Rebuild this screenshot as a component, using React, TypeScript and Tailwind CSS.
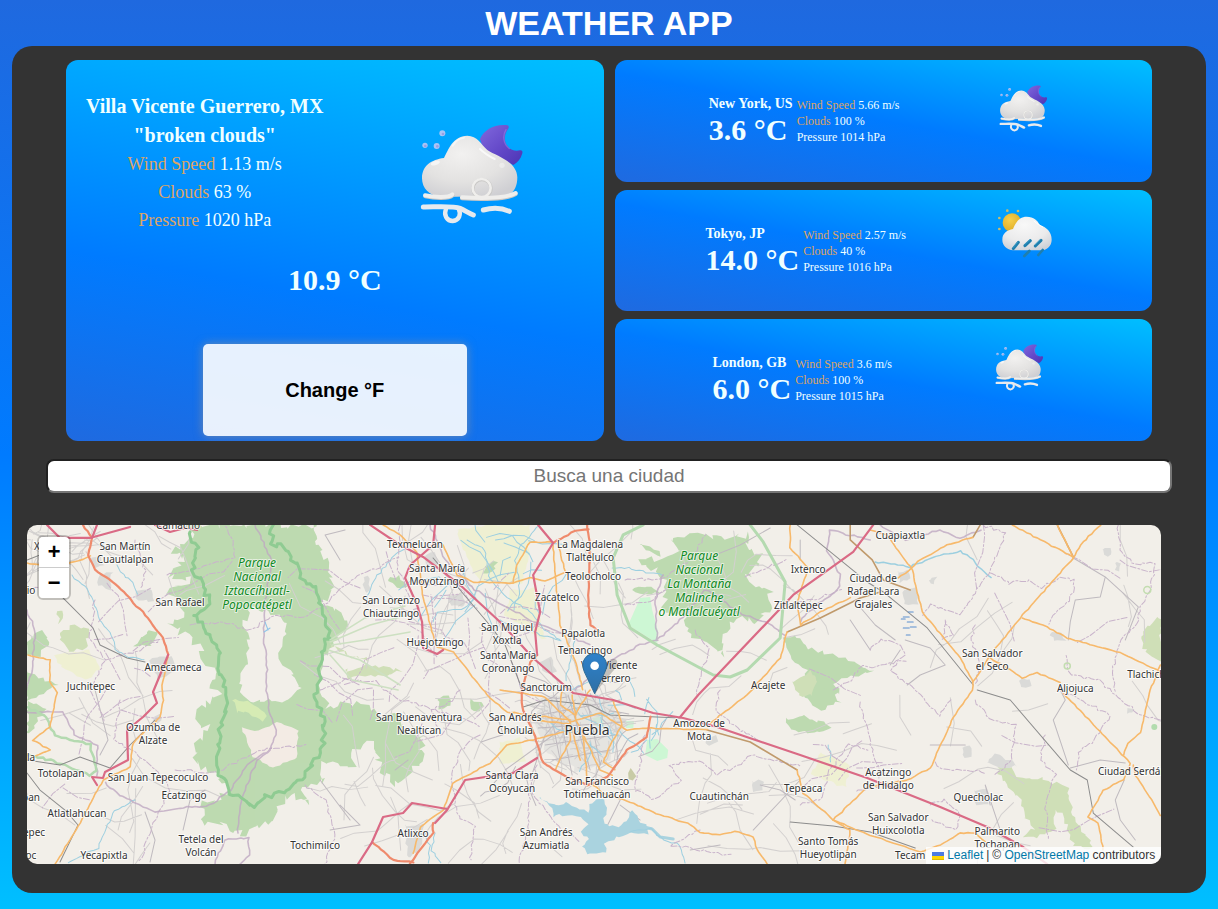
import React, { useState } from "react";

type Point = [number, number];

/* ---------- helpers for the map drawing ---------- */

function seeded(seed: number) {
  let s = seed;
  return () => {
    s = (s * 16807) % 2147483647;
    return s / 2147483647;
  };
}

function parse(points: string): Point[] {
  return points.split(" ").map((p) => p.split(",").map(Number) as Point);
}

/** Subdivides a polyline and shakes it, so that borders and forest edges look natural. */
function rough(points: string, amount: number, seed: number, closed = false): string {
  const rnd = seeded(seed);
  const src = parse(points);
  if (closed) src.push(src[0]);
  const out: string[] = [`M${src[0][0]} ${src[0][1]}`];
  for (let i = 1; i < src.length; i++) {
    const [x0, y0] = src[i - 1];
    const [x1, y1] = src[i];
    const len = Math.hypot(x1 - x0, y1 - y0);
    const steps = Math.max(1, Math.round(len / 4));
    for (let k = 1; k <= steps; k++) {
      const t = k / steps;
      const x = x0 + (x1 - x0) * t + (rnd() - 0.5) * amount;
      const y = y0 + (y1 - y0) * t + (rnd() - 0.5) * amount;
      out.push(`L${x.toFixed(1)} ${y.toFixed(1)}`);
    }
  }
  return out.join("") + (closed ? "Z" : "");
}

function line(points: string): string {
  return "M" + points.split(" ").join("L");
}

const forests = [
  "187,525 193,538 173,552 187,558 167,575 190,580 163,590 177,603 187,612 167,625 187,635 200,648 207,665 218,675 210,685 220,695 200,707 195,720 208,728 197,740 195,757 203,770 219,775 227,790 217,800 200,805 203,823 220,823 233,833 247,833 257,825 275,823 277,807 290,793 310,803 300,787 327,780 320,765 353,765 357,748 370,743 377,757 380,770 393,783 407,777 420,763 423,737 407,733 397,713 380,717 370,707 347,703 327,707 320,690 324,660 333,640 350,628 337,612 323,605 333,582 323,558 313,542 317,525",
  "673,538 697,535 720,538 747,535 743,545 760,555 753,568 747,577 770,592 767,615 753,622 737,615 727,628 723,655 713,648 706,640 687,632 683,615 663,608 667,592 663,575 640,560 660,558 680,552",
  "783,638 793,634 807,648 833,655 857,662 872,672 850,677 833,682 840,694 822,696 813,688 800,690 806,670 793,658",
  "803,690 830,690 840,702 820,710 806,700",
  "786,718 805,717 830,726 820,732 790,731",
  "33,638 42,630 50,642 40,655 27,655 27,642",
  "147,632 158,630 150,648 135,645",
  "27,672 57,685 40,695 27,700",
  "27,700 45,708 33,730 27,735",
  "438,699 448,696 450,705 440,709",
  "472,700 483,702 480,711 471,708",
  "485,566 497,561 492,572 484,573",
  "388,580 400,577 406,585 398,589",
  "632,590 652,587 660,593 645,595",
  "640,545 655,548 660,555 648,552",
];

const paleWoods = [
  "997,768 1010,767 1020,778 1037,778 1067,787 1073,817 1087,837 1092,848 1075,845 1060,815 1052,800 1055,830 1035,838 1023,837 1033,828 1023,817 1018,797 1010,790",
  "1143,635 1155,618 1161,620 1161,662 1153,658 1142,648",
  "60,635 70,625 87,628 85,648 70,652",
  "57,612 62,608 64,620 58,624",
  "793,682 808,672 818,676 812,696 800,697",
  "345,670 370,665 400,671 380,675 350,678",
  "330,645 345,652 370,660 350,655",
];

const farmland = [
  "457,530 490,525 530,525 528,560 522,583 480,583 468,560",
  "510,590 535,588 538,612 545,640 520,625 505,615",
  "55,655 90,650 100,670 85,680 62,668",
  "820,752 850,765 845,788 812,775",
  "230,700 262,705 265,722 240,712",
  "500,742 520,738 525,760 500,765",
];

const towns = [
  "100,575 112,572 110,590 98,585",
  "135,590 150,588 153,602 138,600",
  "150,660 172,655 175,672 158,680",
  "90,560 100,555 104,566 94,568",
  "425,556 436,552 438,565 428,567",
  "447,597 462,592 465,606 450,606",
  "540,662 552,658 556,672 545,673",
  "903,590 916,588 918,605 905,604",
  "897,572 908,570 910,578 900,582",
  "1050,634 1060,632 1065,641 1054,640",
  "1020,680 1030,678 1030,686 1022,687",
  "962,748 970,746 971,757 963,758",
  "988,762 995,754 1010,760 1018,766 1000,768",
  "975,791 985,789 988,804 976,804",
  "405,826 423,824 420,850 408,858",
  "752,782 762,780 763,790 753,791",
  "706,738 716,736 717,744 707,746",
  "930,580 936,578 935,584 930,585",
  "1102,550 1110,548 1112,555 1104,556",
  "1115,563 1121,562 1120,570 1116,569",
  "363,578 369,576 370,592 364,592",
  "1127,708 1133,708 1133,713 1127,713",
  "153,717 160,714 162,722 155,724",
];

const waterways = [
  "875,562 910,567 940,555 960,551 975,562 990,578",
  "72,575 88,590 95,605 100,620 112,635 115,650 128,657 145,660",
  "117,565 125,577 133,583 137,595",
  "135,800 115,810 108,825 98,848 80,856 68,862",
  "467,540 485,550 490,580 510,600 530,612 545,630 560,640",
  "540,525 520,545 515,560 520,590 513,610",
  "433,622 438,612 465,608 475,598",
  "612,568 628,568 650,573 663,575",
  "435,833 432,850 440,862",
  "420,830 430,845 428,862",
  "367,600 375,578 395,555 405,550",
  "630,832 650,828 660,838 680,845 685,862",
  "828,745 831,755 830,762",
  "575,640 570,665 565,680",
  "600,660 592,680 570,690",
  "500,620 540,635 560,640",
];

const parkEdge =
  "190,532 197,548 192,572 203,582 210,605 193,615 210,635 220,655 217,672 228,692 225,710 220,730 218,773 230,793 245,800 253,808 267,797 287,790 307,773 323,747 325,720 317,703 315,695 320,675 323,648 330,635 320,608 317,588 300,578 297,565 283,545 270,545 273,525";

const malincheEdge =
  "643,525 623,535 613,558 617,595 630,628 657,645 713,675 730,677 747,670 780,638 785,582 763,542 750,525";

const motorways = [
  "47,525 60,538 90,538 130,527",
  "97,525 92,538",
  "168,655 160,675 153,692 157,703 143,717 127,730 128,760 105,772 103,778 92,777 97,785",
  "370,525 400,545 423,557 460,585 500,622 533,658 573,693 613,700 653,713 683,718 717,727 800,755 867,778 940,807 987,827 1023,847 1047,864",
  "435,525 433,545 410,565 405,578 417,605 422,622 423,648 437,654 443,650",
  "873,525 853,552 793,595 698,695 680,717",
  "538,525 553,543 533,575 540,612 535,632 537,655",
  "537,758 513,773 465,780 447,810 435,823",
  "447,809 412,803 403,813 383,817 372,842 358,864",
  "155,525 170,532 185,528 197,530",
];

const trunks = [
  "83,525 92,538 88,555 95,570 113,582 127,595 133,603 143,612 153,625 163,638 168,655",
  "537,655 530,662 522,690 522,707 535,737 543,763 567,777 587,785 607,777 627,750 647,737 650,717",
  "587,525 590,545 588,595 590,625 600,632",
  "433,823 433,833 417,853 410,864",
  "372,842 393,860 413,862",
  "553,543 575,531 588,529",
  "596,690 600,672 592,660",
];

const primaries = [
  "168,657 162,685 163,700 160,717 133,743 130,767 103,780 80,823 55,864",
  "28,655 50,660 50,682 57,693 50,727 33,740 50,750 36,756",
  "27,563 50,567 75,562 90,556",
  "383,525 400,535 417,552 423,598 433,635 437,647 453,652 487,695 507,712 533,715 570,720",
  "443,545 457,575 473,582 513,583 530,578 545,581 565,572 557,540",
  "513,583 517,565 530,542 553,542",
  "553,545 555,575 560,625 575,660 583,690",
  "563,732 533,740 507,745 490,763 453,783 443,810 420,827 413,853",
  "583,733 587,780 603,793 630,802 660,815 687,823 700,832 720,835 735,831 753,837 757,850 767,864",
  "570,722 600,713 627,730 647,728 707,730",
  "797,770 803,793 833,820 870,835 920,852 940,845 960,833 975,833 985,842",
  "833,820 867,787 907,780 930,768 953,717 972,690 973,682 990,655 1020,618 1073,558 1080,545 1100,525",
  "1012,525 1073,557 1057,525",
  "870,530 887,535 912,570 922,612 960,658 973,682",
  "898,578 912,568 917,562 947,545 973,537",
  "1022,618 1043,625 1067,638 1120,653 1161,672",
  "990,658 1010,670 1022,678 1037,673 1060,682",
  "1063,693 1130,763 1123,780 1103,790 1088,817 1098,823 1103,850",
  "1160,665 1150,690 1140,733 1128,743 1123,755",
  "1133,765 1135,775 1147,793 1160,815",
  "790,525 790,548 808,568 797,602 800,625 820,612 850,598",
  "787,632 780,658 747,695 710,723",
  "500,690 545,697 570,722 580,760",
  "572,695 576,720 600,770 612,775",
  "535,720 570,724 570,740 555,770",
  "613,700 622,725 610,745 603,762 615,770",
  "590,690 575,715 560,705 562,690",
  "833,820 850,830 845,864",
];

const browns = [
  "850,525 850,540 872,560 883,580 910,590",
  "973,537 980,525",
  "787,632 820,618 860,598 880,592",
  "707,730 750,742 797,770",
  "1057,525 1073,557",
];

const rails = [
  "27,560 40,555 63,598 93,628 100,645 127,658 145,662",
  "433,558 487,622 505,645 523,692",
  "797,525 867,582 883,592 927,628 973,685",
  "977,690 1010,700 1070,770 1087,780 1093,813 1133,847",
  "523,707 545,700 590,705 610,715 680,718",
  "790,822 833,826 870,832 915,848",
  "27,760 60,765 80,757 110,768 130,745 155,720",
  "27,773 40,790 65,810 78,825 60,862",
];

const regionBorders = [
  "255,525 272,560 265,600 263,640 267,662 266,690 270,715 277,730 270,750 250,762 230,790 210,805 180,808 155,812 140,805 120,795 105,782",
  "238,833 240,810 245,790 257,760 272,748",
  "27,610 35,630 32,670 27,690",
  "27,712 63,712 75,735 97,745 97,775",
  "430,525 445,560 475,590 540,625 590,645",
  "663,575 655,600 657,640 680,620 705,590 720,597 735,612 765,622 785,635",
  "215,864 225,840 248,838 250,855 240,864",
  "575,690 610,660 640,645 657,640",
  "870,540 850,535 830,530 827,550 840,575 838,590 810,610 800,622",
  "880,525 905,540 940,530 960,538 980,530",
];

const dashedBorders = [
  "167,575 200,567 235,558 233,540 225,525",
  "190,625 220,622 250,630 275,615 303,618 325,605 350,580 400,557",
  "175,770 215,772 260,750 305,745",
  "305,785 325,800 335,835 325,864",
  "320,690 345,680 375,682 400,700 420,705 480,725",
  "983,525 1005,533 990,570 960,615 930,605 922,615",
  "990,573 1010,583 1030,580 1040,588 1060,578 1075,580 1070,600 1055,612 1050,625",
  "1118,525 1120,550 1135,565 1155,563 1150,590 1140,607 1137,625 1120,640 1112,670 1115,690",
  "870,650 880,640 900,645 905,655 890,670 915,690 940,715 950,700",
  "975,625 970,640 980,660 975,685",
  "945,620 952,635 942,640 945,622",
  "1060,690 1080,700 1110,715 1095,740 1080,750 1075,770",
  "975,700 990,720 1015,725 1012,760 995,775",
  "1045,735 1040,760 1055,775 1045,800 1048,840",
  "645,735 640,765 635,790 655,800 680,780 670,765 700,760 715,775 740,765 750,755 800,765",
  "700,830 670,845 700,850 730,855",
  "480,735 460,750 450,780 460,820 475,825 470,860",
  "537,765 530,790 545,810 560,830 580,840",
  "530,790 528,830 518,864",
  "860,702 870,745 880,770 880,785 855,792",
  "935,762 945,770 965,770 985,772",
  "800,805 820,800 830,770 848,745 868,750",
  "720,690 715,710 740,730 760,740",
  "1160,720 1140,715 1115,695 1100,680 1070,675 1065,655",
  "135,540 145,570 140,590",
  "95,600 90,640 105,660 90,690 105,720",
  "105,660 140,650 160,640",
  "120,700 115,740 145,760 160,775 170,790 150,830 140,862",
  "400,525 398,570 410,600",
  "460,690 455,700 430,710 440,730",
  "625,580 665,578 690,560 705,535",
  "625,605 650,600 672,585",
  "745,577 760,570 785,560",
  "785,605 815,600 840,590",
  "833,690 850,680 862,665 875,668 905,660",
  "695,630 710,650 700,675 695,695",
  "930,805 945,800 960,815 955,830 930,820",
];

const lake =
  "540,797 546,801 553,805 567,803 576,808 587,812 592,802 597,798 605,799 607,812 603,823 617,827 626,820 631,811 636,813 637,821 647,825 647,834 630,832 617,838 605,843 607,852 587,853 581,846 590,840 581,833 587,823 580,818 567,815 553,816 551,808";

/** Minor roads, thrown over the plain between the given bounds. */
function tracks(count: number, x0: number, y0: number, w: number, h: number, seed: number, reach = 22): string {
  const rnd = seeded(seed);
  let d = "";
  for (let i = 0; i < count; i++) {
    let x = x0 + rnd() * w;
    let y = y0 + rnd() * h;
    let a = rnd() * Math.PI * 2;
    d += `M${x.toFixed(1)} ${y.toFixed(1)}`;
    const n = 2 + Math.floor(rnd() * 4);
    for (let k = 0; k < n; k++) {
      a += (rnd() - 0.5) * 1.2;
      x += Math.cos(a) * reach * (0.4 + rnd() * 0.8);
      y += Math.sin(a) * reach * (0.4 + rnd() * 0.8);
      d += `L${x.toFixed(1)} ${y.toFixed(1)}`;
    }
  }
  return d;
}

/** Centre x, middle of the first line, then the lines. */
const places: [number, number, string[]][] = [
  [178, 525, ["Camacho"]],
  [125, 546, ["San Martín", "Cuautlalpan"]],
  [37, 546, ["X"]],
  [31, 590, ["io"]],
  [180, 602, ["San Rafael"]],
  [173, 667, ["Amecameca"]],
  [91, 686, ["Juchitepec"]],
  [153, 727, ["Ozumba de", "Alzate"]],
  [31, 757, ["la"]],
  [61, 773, ["Totolapan"]],
  [158, 777, ["San Juan Tepecoculco"]],
  [184, 795, ["Ecatzingo"]],
  [31, 797, ["pan"]],
  [77, 813, ["Atlatlahucan"]],
  [34, 832, ["epec"]],
  [31, 855, ["oc"]],
  [104, 855, ["Yecapixtla"]],
  [201, 839, ["Tetela del", "Volcán"]],
  [315, 845, ["Tochimilco"]],
  [415, 544, ["Texmelucan"]],
  [437, 568, ["Santa María", "Moyotzingo"]],
  [391, 600, ["San Lorenzo", "Chiautzingo"]],
  [435, 642, ["Huejotzingo"]],
  [507, 627, ["San Miguel", "Xoxtla"]],
  [508, 655, ["Santa María", "Coronango"]],
  [546, 687, ["Sanctorum"]],
  [557, 597, ["Zacatelco"]],
  [590, 544, ["La Magdalena", "Tlaltelulco"]],
  [593, 576, ["Teolocholco"]],
  [583, 633, ["Papalotla"]],
  [585, 650, ["Tenancingo"]],
  [609, 665, ["Villa Vicente", "Guerrero"]],
  [419, 717, ["San Buenaventura", "Nealtican"]],
  [515, 717, ["San Andrés", "Cholula"]],
  [512, 775, ["Santa Clara", "Ocoyucan"]],
  [597, 781, ["San Francisco", "Totimehuacán"]],
  [546, 832, ["San Andrés", "Azumiatla"]],
  [413, 833, ["Atlixco"]],
  [699, 723, ["Amozoc de", "Mota"]],
  [719, 796, ["Cuautinchán"]],
  [768, 685, ["Acajete"]],
  [798, 605, ["Zitlaltépec"]],
  [808, 569, ["Ixtenco"]],
  [900, 535, ["Cuapiaxtla"]],
  [873, 578, ["Ciudad de", "Rafael Lara", "Grajales"]],
  [992, 653, ["San Salvador", "el Seco"]],
  [1075, 688, ["Aljojuca"]],
  [1146, 674, ["Tlachich"]],
  [1132, 771, ["Ciudad Serdán"]],
  [888, 772, ["Acatzingo", "de Hidalgo"]],
  [978, 797, ["Quecholac"]],
  [898, 817, ["San Salvador", "Huixcolotla"]],
  [997, 831, ["Palmarito", "Tochapan"]],
  [803, 788, ["Tepeaca"]],
  [828, 841, ["Santo Tomás", "Hueyotlipan"]],
  [910, 855, ["Tecam"]],
];

const parks: [number, number, string[]][] = [
  [257, 562, ["Parque", "Nacional", "Iztaccíhuatl-", "Popocatépetl"]],
  [699, 555, ["Parque", "Nacional", "La Montaña", "Malinche", "o Matlalcuéyatl"]],
];

function MapCanvas() {
  return (
    <svg
      className="block h-full w-full"
      viewBox="27 525 1134 339"
      preserveAspectRatio="xMidYMid slice"
      role="img"
      aria-label="Mapa de Puebla"
      strokeLinejoin="round"
      strokeLinecap="round"
    >
      <defs>
        <linearGradient id="pin" x1="0" y1="0" x2="0" y2="1">
          <stop offset="0" stopColor="#2e82cb" />
          <stop offset="1" stopColor="#2e6fa5" />
        </linearGradient>
      </defs>
      <rect x="27" y="525" width="1134" height="339" fill="#f2efe9" />
      <g fill="#eff0d3">
        {farmland.map((p, i) => (
          <path key={i} d={rough(p, 3, 40 + i, true)} />
        ))}
      </g>
      <g fill="#bddab1">
        {forests.map((p, i) => (
          <path key={i} d={rough(p, i < 2 ? 8 : 4, 11 + i, true)} />
        ))}
      </g>
      <g fill="#cfdfb7">
        {paleWoods.map((p, i) => (
          <path key={i} d={rough(p, 5, 71 + i, true)} />
        ))}
      </g>
      <g fill="#f2efe9">
        <path d={rough("253,608 243,622 250,638 246,662 238,682 245,698 262,702 285,700 300,690 290,670 277,655 285,638 283,618 270,612", 6, 9, true)} />
      </g>
      <path d={rough("242,728 253,757 273,768 297,757 298,730 277,722 258,731", 2, 5, true)} fill="#f3ebe4" />
      <path d={rough("233,700 248,701 268,716 262,722 246,712 236,712", 3, 8, true)} fill="#d6ecb4" />
      <g fill="#cdf7d4">
        <path d="M640 598L650 597L652 610L658 632L657 643L628 625Z" />
        <path d="M647 740L657 739L668 750L667 758L657 761L645 755Z" />
        <path d="M625 721L634 721L633 728L626 728Z" />
        <path d="M592 718L602 716L604 725L596 727Z" />
      </g>
      <g fill="#dadad8">
        {towns.map((p, i) => (
          <path key={i} d={rough(p, 3, 90 + i, true)} />
        ))}
        <path d={rough("540,700 575,690 610,700 625,725 605,765 575,770 550,755 535,725", 6, 33, true)} opacity=".55" />
      </g>
      <path d={rough("628,773 631,768 636,776 633,781 629,779", 1, 3, true)} fill="#c8cba6" />

      <g fill="none" stroke="#d3d0cf" strokeWidth="1">
        <path d={tracks(28, 30, 530, 150, 325, 101)} />
        <path d={tracks(46, 340, 530, 250, 200, 202)} />
        <path d={tracks(20, 340, 740, 200, 115, 303)} />
        <path d={tracks(20, 590, 530, 200, 180, 404, 18)} />
        <path d={tracks(12, 640, 740, 170, 115, 505)} />
        <path d={tracks(22, 800, 530, 350, 325, 606)} />
        <path d={tracks(70, 535, 695, 85, 75, 707, 10)} />
        <path d={tracks(26, 30, 530, 60, 35, 808, 12)} />
      </g>
      <g fill="none" stroke="#bfbabf" strokeWidth="1">
        <path d={tracks(16, 480, 680, 160, 100, 917, 12)} />
        <path d="M548 700L560 760M556 697L572 775M568 695L590 770M585 690L600 765M540 715L620 700M538 728L625 722M545 745L615 735M552 760L610 750M530 780L545 735L575 700M505 770L560 730" />
        <path d="M1073 558L1105 577L1138 607L1125 640M1105 577L1100 597L1075 600L1070 622L1068 640M1060 690L1065 700L1053 720L1068 765M1070 768L1100 760L1125 763M1124 780L1115 800L1120 820L1135 840" />
        <path d="M890 665L900 650M905 640L930 648L945 665L920 675L907 685M850 620L870 650M858 605L875 625L895 640M800 540L800 560M715 555L740 545L770 528M340 560L325 535L345 530M965 745L930 745M990 805L985 785L1000 830" />
        <path d="M95 690L108 740L100 755M145 812L155 840L150 862M183 830L190 800L205 790M340 805L360 825L330 830M320 780L350 820M395 770L408 760M760 785L780 790L795 800M690 850L720 845M753 830L800 780M620 800L605 830M620 805L640 820" />
      </g>
      <path d={rough(lake, 3, 21, true)} fill="#aad3df" />
      <path d="M640 826L652 829L660 837L673 839" fill="none" stroke="#aad3df" strokeWidth="3" />
      <g fill="none" stroke="#9dcfe0" strokeWidth="1">
        {waterways.map((p, i) => (
          <path key={i} d={rough(p, 2, 120 + i)} strokeWidth={i === 0 ? 1.5 : 1} />
        ))}
        <path d={tracks(18, 445, 530, 110, 90, 1001, 14)} />
        <path d={tracks(20, 580, 695, 80, 50, 1002, 9)} />
      </g>
      <g fill="none" stroke="#c9b4cb" strokeWidth="1" strokeDasharray="6 2 2 2">
        {dashedBorders.map((p, i) => (
          <path key={i} d={rough(p, 3, 200 + i)} />
        ))}
        <path d={tracks(12, 800, 540, 340, 300, 1101, 20)} />
        <path d={tracks(30, 330, 560, 230, 170, 1102, 18)} />
        <path d={tracks(14, 60, 560, 110, 280, 1103, 18)} />
      </g>
      <g fill="none" stroke="#bfa9c2" strokeWidth="1.6" opacity=".8">
        {regionBorders.map((p, i) => (
          <path key={i} d={rough(p, 2, 300 + i)} />
        ))}
      </g>
      <path d={rough(parkEdge, 5, 61)} fill="none" stroke="#8fcb92" strokeWidth="3" />
      <path d={line(malincheEdge)} fill="none" stroke="#b4dab0" strokeWidth="3" />
      <path d={rough("27,755 50,760 90,775 97,770 90,745 55,735 45,715 27,708", 2, 62)} fill="none" stroke="#b4dab0" strokeWidth="2.5" />
      <path d="M330 640L365 618L405 606M330 642L370 625L408 615M328 650L360 660L400 685M330 655L352 680L398 690M332 645L365 640L410 632" fill="none" stroke="#cde0c2" strokeWidth="1.5" />

      <g fill="none" stroke="#8c8c8c" strokeWidth="1">
        {rails.map((p, i) => (
          <path key={i} d={line(p)} />
        ))}
      </g>
      <g fill="none" stroke="#c09a6c" strokeWidth="1.6">
        {browns.map((p, i) => (
          <path key={i} d={line(p)} />
        ))}
      </g>
      <g fill="none" stroke="#f7b96b" strokeWidth="1.6">
        {primaries.map((p, i) => (
          <path key={i} d={rough(p, 1, 400 + i)} />
        ))}
      </g>
      <g fill="none" stroke="#ef8a6c" strokeWidth="2.2">
        {trunks.map((p, i) => (
          <path key={i} d={rough(p, 1, 500 + i)} />
        ))}
      </g>
      <g fill="none" stroke="#da6a85" strokeWidth="2.2">
        {motorways.map((p, i) => (
          <path key={i} d={line(p)} />
        ))}
      </g>
      <path d="M903 617H909M907 622H913M901 619H905M910 627H916M903 628H909M906 635H910M908 612H913" stroke="#5a8fd0" strokeWidth="1" />
      <path d="M265 622L268 630M264 632L270 628" stroke="#8ec4e8" strokeWidth="1" />
      <circle cx="1147" cy="590" r="3.5" fill="none" stroke="#c3ddb0" strokeWidth="1.5" />
      <circle cx="1067" cy="666" r="3" fill="none" stroke="#c3ddb0" strokeWidth="1.5" />
      <circle cx="1154" cy="727" r="3" fill="#b2dcae" />

      <g
        fontFamily="'Noto Sans', sans-serif"
        fontSize="10"
        textAnchor="middle"
        fill="#333333"
        stroke="#ffffff"
        strokeOpacity=".8"
        strokeWidth="2"
        paintOrder="stroke"
      >
        {places.map(([x, y, rows]) => (
          <text key={rows.join(" ") + x}>
            {rows.map((row, i) => (
              <tspan key={row} x={x} y={y + 4 + i * 13}>
                {row}
              </tspan>
            ))}
          </text>
        ))}
        <text fontSize="14" x="587" y="735">
          Puebla
        </text>
      </g>
      <g
        fontFamily="'Noto Sans', sans-serif"
        fontSize="12"
        fontStyle="italic"
        textAnchor="middle"
        fill="#0f8a24"
        stroke="#ffffff"
        strokeOpacity=".6"
        strokeWidth="2"
        paintOrder="stroke"
      >
        {parks.map(([x, y, rows]) => (
          <text key={rows.join(" ")}>
            {rows.map((row, i) => (
              <tspan key={row} x={x} y={y + 5 + i * 14}>
                {row}
              </tspan>
            ))}
          </text>
        ))}
      </g>

      <path d="M595 693L612 672C620 664 618 656 610 660C602 663 598 672 595 693Z" fill="#000" opacity=".2" />
      <g transform="translate(582 653)">
        <path
          d="M12.5 .5C5.8 .5 .6 5.8 .6 12.6c0 2 .9 4.6 1.7 6.5L12.5 40.5 22.700 19.1c.9-1.900 1.700-4.400 1.700-6.500C24.400 5.800 19.200.5 12.500.5z"
          fill="url(#pin)"
          stroke="#2e6c97"
          strokeWidth="1"
        />
        <circle cx="12.5" cy="12.7" r="4.3" fill="#fff" />
      </g>
    </svg>
  );
}

/* ---------- weather drawings ---------- */

function NightWind({ viewBox, className, id }: { viewBox: string; className: string; id: string }) {
  return (
    <svg viewBox={viewBox} className={className} role="img" aria-label="Nubes y viento de noche">
      <defs>
        <radialGradient id={id + "c"} cx=".42" cy=".3" r=".75">
          <stop offset="0" stopColor="#f2f1f0" />
          <stop offset=".6" stopColor="#e3e2e1" />
          <stop offset="1" stopColor="#cfcfd3" />
        </radialGradient>
        <linearGradient id={id + "m"} x1="0" y1="0" x2="1" y2="1">
          <stop offset="0" stopColor="#8068dc" />
          <stop offset=".55" stopColor="#6348c8" />
          <stop offset="1" stopColor="#4b35b4" />
        </linearGradient>
      </defs>
      <path
        d="M240 120C252 92 285 74 322 79C328 81 327 86 324 90C308 112 312 140 336 152C345 156 353 155 360 154C367 153 369 158 366 166C362 180 354 190 340 198L250 150Z"
        fill={`url(#${id}m)`}
      />
      <path d="M318 92C308 108 308 134 328 149" fill="none" stroke="#9d8bea" strokeWidth="4" strokeLinecap="round" opacity=".45" />
      <g fill="#a9c4f5">
        <circle cx="127" cy="103" r="9" />
        <circle cx="75" cy="139" r="8" />
        <circle cx="110" cy="141" r="9" />
      </g>
      <g fill="#8f86d8" opacity=".6">
        <circle cx="129" cy="105" r="4" />
        <circle cx="76" cy="141" r="4" />
        <circle cx="112" cy="142" r="4" />
      </g>
      <path
        d="M66 238C66 200 94 182 132 177C146 150 158 112 202 110C232 110 243 136 262 153C290 172 350 186 352 235C352 262 342 288 312 291L120 294C88 290 66 268 66 238Z"
        fill={`url(#${id}c)`}
      />
      <path d="M240 150C256 166 268 172 284 180" fill="none" stroke="#fff" strokeWidth="6" strokeLinecap="round" opacity=".7" />
      <path d="M158 140C166 126 178 118 192 116" fill="none" stroke="#fff" strokeWidth="6" strokeLinecap="round" opacity=".5" />
      <ellipse cx="106" cy="192" rx="14" ry="6" fill="#fff" opacity=".6" transform="rotate(-20 106 192)" />
      <circle cx="306" cy="199" r="8" fill="#fff" opacity=".35" />
      <g fill="none" strokeLinecap="round" strokeLinejoin="round">
        <g stroke="#c9c8c6" strokeWidth="12">
          <path d="M76 292C100 297 146 301 158 289" />
          <path d="M186 298C240 302 320 302 347 285" />
          <circle cx="246" cy="269" r="27" strokeWidth="10" />
        </g>
        <g stroke="#efeeec" strokeWidth="12">
          <path d="M75 289C100 294 146 298 157 286" />
          <path d="M186 295C240 298 320 298 347 282" />
          <circle cx="245" cy="267" r="27" strokeWidth="8" />
        </g>
        <g stroke="#e6eaee" strokeWidth="15">
          <path d="M70 324C108 324 160 320 180 328C196 335 206 342 220 348" />
          <path d="M138 330C130 350 142 366 158 366C178 364 184 346 176 330" strokeWidth="13" />
          <path d="M250 333C276 326 304 326 328 337" />
        </g>
      </g>
    </svg>
  );
}

function SunRain({ viewBox, className }: { viewBox: string; className: string }) {
  return (
    <svg viewBox={viewBox} className={className} role="img" aria-label="Lluvia con sol">
      <defs>
        <radialGradient id="rainCloud" cx=".45" cy=".25" r=".8">
          <stop offset="0" stopColor="#f8f8f8" />
          <stop offset=".6" stopColor="#ebebec" />
          <stop offset="1" stopColor="#cdd0d6" />
        </radialGradient>
        <radialGradient id="sun" cx=".4" cy=".35" r=".8">
          <stop offset="0" stopColor="#f6cf4a" />
          <stop offset="1" stopColor="#d9a520" />
        </radialGradient>
      </defs>
      <g fill="#c9bd6a">
        <circle cx="110" cy="453" r="4" />
        <circle cx="142" cy="454" r="4" />
        <circle cx="86" cy="475" r="4" />
        <circle cx="86" cy="508" r="4" />
      </g>
      <circle cx="124" cy="489" r="28" fill="url(#sun)" />
      <path
        d="M95 540C95 520 110 511 127 508C134 490 145 471 168 471C190 471 200 482 208 496C226 502 243 516 243 540C243 560 228 572 210 572H128C108 570 95 558 95 540Z"
        fill="url(#rainCloud)"
      />
      <path d="M190 484C200 494 210 498 216 502" fill="none" stroke="#fff" strokeWidth="3" strokeLinecap="round" />
      <g strokeLinecap="round" stroke="#1f7fae" strokeWidth="9" fill="none">
        <path d="M143 548L128 567M179 543L163 558M211 542L194 559" />
        <path d="M176 574L161 589M216 571L203 586" strokeWidth="8" />
      </g>
      <g strokeLinecap="round" stroke="#49a9d2" strokeWidth="2" fill="none">
        <path d="M141 547L128 563M177 541L163 554M209 540L194 555" />
      </g>
    </svg>
  );
}

/* ---------- cards ---------- */

type Reading = {
  city: string;
  celsius: number;
  wind: string;
  clouds: number;
  pressure: number;
  icon: "night" | "rain";
};

const cities: Reading[] = [
  { city: "New York, US", celsius: 3.6, wind: "5.66", clouds: 100, pressure: 1014, icon: "night" },
  { city: "Tokyo, JP", celsius: 14, wind: "2.57", clouds: 40, pressure: 1016, icon: "rain" },
  { city: "London, GB", celsius: 6, wind: "3.6", clouds: 100, pressure: 1015, icon: "night" },
];

function degrees(celsius: number, fahrenheit: boolean) {
  return fahrenheit ? `${((celsius * 9) / 5 + 32).toFixed(1)} °F` : `${celsius.toFixed(1)} °C`;
}

function CityCard({ data, fahrenheit }: { data: Reading; fahrenheit: boolean }) {
  return (
    <article className="flex flex-1 items-center justify-evenly rounded-xl bg-[linear-gradient(10deg,#1f6ae0_0%,#007bff_50%,#00bfff_100%)]">
      <div className="flex items-center gap-1">
        <div>
          <h3 className="text-[14px] font-bold leading-[18px]">{data.city}</h3>
          <p className="text-[30px] font-bold leading-[34px]">{degrees(data.celsius, fahrenheit)}</p>
        </div>
        <ul className="text-[12px] leading-4">
          <li>
            <span className="text-[#dca466]">Wind Speed</span> {data.wind} m/s
          </li>
          <li>
            <span className="text-[#dca466]">Clouds</span> {data.clouds} %
          </li>
          <li>Pressure {data.pressure} hPa</li>
        </ul>
      </div>
      {data.icon === "night" ? (
        <NightWind viewBox="27 24 410 563" className="h-[88px] w-16" id={data.city.slice(0, 3)} />
      ) : (
        <SunRain viewBox="79 442 192 264" className="h-[88px] w-16" />
      )}
    </article>
  );
}

export default function App() {
  const [fahrenheit, setFahrenheit] = useState(false);
  const [query, setQuery] = useState("");

  return (
    <div className="min-h-screen bg-[linear-gradient(to_bottom,#1f69df_0%,#007bff_50%,#00bfff_100%)] px-3 pb-4 font-['Liberation_Serif',serif] text-[#f0ffff]">
      <h1 className="text-center font-['Liberation_Sans',sans-serif] text-[34px] font-bold leading-[46px] text-white">
        WEATHER APP
      </h1>

      <main className="rounded-[20px] bg-[#333333] pb-[29px] pt-[14px]">
        <section className="mx-[54px] grid grid-cols-2 gap-[11px]">
          <article className="flex flex-col items-center overflow-hidden rounded-xl bg-[linear-gradient(10deg,#1f6ae0_0%,#007bff_40%,#00bfff_100%)] pb-[5px] pt-8">
            <div className="flex w-full items-center justify-around">
              <div className="text-center text-[18px] leading-7">
                <h2 className="text-[20px] font-bold leading-[29px]">Villa Vicente Guerrero, MX</h2>
                <p className="text-[20px] font-bold leading-[29px]">"broken clouds"</p>
                <p>
                  <span className="text-[#dca466]">Wind Speed</span> 1.13 m/s
                </p>
                <p>
                  <span className="text-[#dca466]">Clouds</span> 63 %
                </p>
                <p>
                  <span className="text-[#dca466]">Pressure</span> 1020 hPa
                </p>
              </div>
              <div className="flex w-[220px] justify-center">
                <NightWind viewBox="-6 -18 450 420" className="h-[140px] w-[150px]" id="main" />
              </div>
            </div>
            <p className="mt-[29px] text-[30px] font-bold leading-[34px]">{degrees(10.9, fahrenheit)}</p>
            <button
              type="button"
              onClick={() => setFahrenheit(!fahrenheit)}
              className="mt-[47px] h-[92px] w-[264px] rounded-[5px] bg-white/90 font-['Liberation_Sans',sans-serif] text-[20px] font-bold text-black shadow-[0_0_10px_rgba(150,150,150,0.7)]"
            >
              Change {fahrenheit ? "°C" : "°F"}
            </button>
          </article>

          <div className="flex flex-col gap-2">
            {cities.map((c) => (
              <CityCard key={c.city} data={c} fahrenheit={fahrenheit} />
            ))}
          </div>
        </section>

        <form className="mx-[34px] mt-[18px]" onSubmit={(e) => e.preventDefault()}>
          <input
            type="text"
            aria-label="Busca una ciudad"
            placeholder="Busca una ciudad"
            value={query}
            onChange={(e) => setQuery(e.target.value)}
            className="block h-[34px] w-full rounded-lg border-2 border-b-[#767676] border-l-[#212121] border-r-[#767676] border-t-[#212121] bg-white text-center font-['Liberation_Sans',sans-serif] text-[19px] text-black placeholder:text-[#757575]"
          />
        </form>

        <section className="relative ml-[15px] mt-8 h-[339px] w-[95%] overflow-hidden rounded-[10px]">
          <MapCanvas />
          <div className="absolute left-[10px] top-[10px] flex flex-col rounded-md border-2 border-black/20 bg-clip-padding font-['Liberation_Mono',monospace] text-[22px] font-bold text-black">
            <button
              type="button"
              aria-label="Zoom in"
              className="h-[31px] w-[30px] rounded-t border-b border-[#cccccc] bg-white pt-1 leading-[26px]"
            >
              +
            </button>
            <button
              type="button"
              aria-label="Zoom out"
              className="h-[30px] w-[30px] rounded-b bg-white pt-1 leading-[26px]"
            >
              −
            </button>
          </div>
          <p className="absolute bottom-0 right-0 flex items-center gap-[3px] bg-white/80 px-[6px] font-['Liberation_Sans',sans-serif] text-[12px] leading-[17px] text-[#333333]">
            <a href="https://leafletjs.com" className="flex items-center gap-[3px] text-[#0078a8]">
              <svg viewBox="0 0 12 8" className="h-2 w-3" aria-hidden="true">
                <path fill="#4c7be1" d="M0 0h12v4H0z" />
                <path fill="#ffd500" d="M0 4h12v3H0z" />
                <path fill="#e0bc00" d="M0 7h12v1H0z" />
              </svg>
              Leaflet
            </a>
            <span>|</span>
            <span>
              ©{" "}
              <a href="https://www.openstreetmap.org/copyright" className="text-[#0078a8]">
                OpenStreetMap
              </a>{" "}
              contributors
            </span>
          </p>
        </section>
      </main>
    </div>
  );
}
